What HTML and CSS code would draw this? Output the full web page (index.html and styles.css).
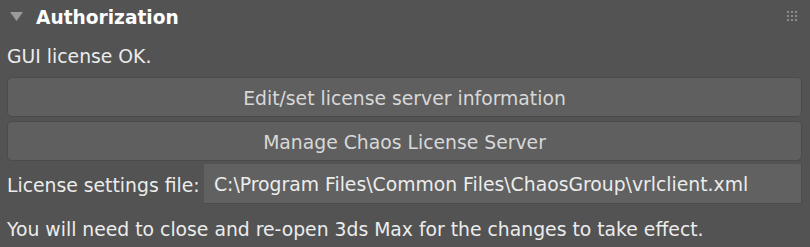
FILE: index.html
```html
<!DOCTYPE html>
<html>
<head>
<meta charset="utf-8">
<link rel="stylesheet" href="styles.css">
</head>
<body>
<div class="panel">
  <div class="header">
    <svg class="arrow" width="13" height="9" viewBox="0 0 13 9"><polygon points="0,0 13,0 6.5,9" fill="#9a9a9a"/></svg>
    <span class="title">Authorization</span>
    <svg class="grip" width="10" height="10" viewBox="0 0 10 10">
      <g fill="#8c8c8c">
        <rect x="0" y="0" width="2" height="2"/><rect x="4" y="0" width="2" height="2"/><rect x="8" y="0" width="2" height="2"/>
        <rect x="0" y="4" width="2" height="2"/><rect x="4" y="4" width="2" height="2"/><rect x="8" y="4" width="2" height="2"/>
        <rect x="0" y="8" width="2" height="2"/><rect x="4" y="8" width="2" height="2"/><rect x="8" y="8" width="2" height="2"/>
      </g>
    </svg>
  </div>
  <div class="status">GUI license OK.</div>
  <div class="buttons">
    <button class="btn">Edit/set license server information</button>
    <button class="btn">Manage Chaos License Server</button>
  </div>
  <div class="file-row">
    <span class="label">License settings file:</span>
    <div class="field">C:\Program Files\Common Files\ChaosGroup\vrlclient.xml</div>
  </div>
  <div class="note">You will need to close and re-open 3ds Max for the changes to take effect.</div>
</div>
</body>
</html>
```
FILE: styles.css
```css
html, body {
  margin: 0;
  padding: 0;
  background: #535353;
}
body {
  width: 810px;
  height: 247px;
  overflow: hidden;
  font-family: "DejaVu Sans", sans-serif;
  font-size: 18.8px;
  color: #ececec;
}
.panel {
  padding: 0 8px 0 7px;
}
.header {
  display: flex;
  align-items: center;
  height: 32px;
  padding-left: 3px;
  padding-right: 5px;
}
.arrow {
  display: block;
}
.title {
  margin-left: 13px;
  padding-top: 2px;
  font-weight: bold;
  font-size: 18.6px;
  color: #ffffff;
  flex: 1;
}
.grip {
  display: block;
}
.status {
  box-sizing: border-box;
  height: 45px;
  padding-top: 4px;
  line-height: 42px;
}
.buttons {
  display: flex;
  flex-direction: column;
  gap: 4px;
}
.btn {
  font: inherit;
  color: #d8d8d8;
  height: 40px;
  background: #5f5f5f;
  border: 1px solid #4b4b4b;
  border-radius: 5px;
  padding: 2px 0 0;
  text-align: center;
}
.file-row {
  display: flex;
  align-items: center;
  margin-top: 3px;
}
.label {
  width: 197px;
  flex: none;
  padding-top: 2px;
}
.field {
  flex: 1;
  height: 40px;
  line-height: 41px;
  background: #616161;
  border-right: 1px solid #4c4c4c;
  border-bottom: 1px solid #4c4c4c;
  box-sizing: border-box;
  padding-left: 10px;
}
.note {
  margin-top: 6px;
  line-height: 40px;
}
```
